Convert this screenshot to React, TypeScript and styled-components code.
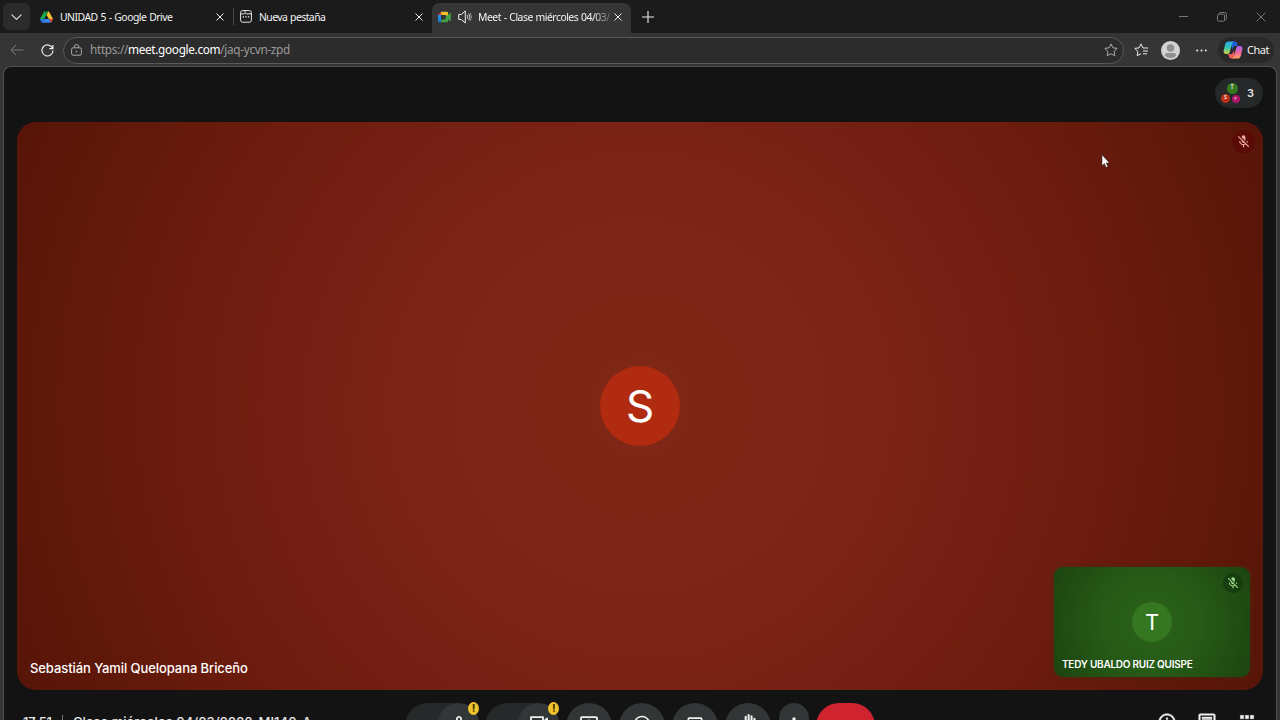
import React from "react";
import styled, { createGlobalStyle } from "styled-components";
import {
  MdApps,
  MdBackHand,
  MdInfoOutline,
  MdMicNone,
  MdMicOff,
  MdMoreVert,
  MdOutlineChat,
  MdOutlineClosedCaption,
  MdOutlineMood,
} from "react-icons/md";

const GlobalStyle = createGlobalStyle`
  *, *::before, *::after { box-sizing: border-box; }
  body { margin: 0; background: #353535; overflow: hidden; }
  svg { display: block; flex: none; }
`;

const ui = `"Noto Sans", "Open Sans", sans-serif`;
const meet = `Inter, Roboto, sans-serif`;

const Window = styled.div`
  display: flex;
  flex-direction: column;
  width: 1280px;
  height: 720px;
  overflow: hidden;
  background: #353535;
  font-family: ${ui};
  color: #f3f3f3;
`;

/* Tab strip */

const TabStrip = styled.header`
  display: flex;
  align-items: flex-end;
  height: 33px;
  flex: none;
  padding-left: 3px;
  background: #1b1b1b;
`;

const TabMenuButton = styled.div`
  display: grid;
  place-items: center;
  width: 27px;
  height: 27px;
  margin-bottom: 3px;
  border-radius: 6px;
  background: #2b2b2b;
`;

const Tab = styled.div<{ $width: number; $inset?: number; $active?: boolean; $divided?: boolean }>`
  position: relative;
  display: flex;
  align-items: center;
  width: ${(p) => p.$width}px;
  height: 30px;
  padding: 0 9px 3px ${(p) => p.$inset ?? 6}px;
  border-radius: 7px 7px 0 0;
  background: ${(p) => (p.$active ? "#353535" : "transparent")};
  ${(p) =>
    p.$divided &&
    `&::after {
      content: "";
      position: absolute;
      right: -1px;
      top: 5px;
      width: 1px;
      height: 17px;
      background: #484848;
    }`}
`;

const TabTitle = styled.span<{ $gap: number; $spacing: number; $fade?: boolean }>`
  flex: 1;
  min-width: 0;
  margin-left: ${(p) => p.$gap}px;
  font-size: 10.4px;
  line-height: 16px;
  letter-spacing: ${(p) => p.$spacing}px;
  word-spacing: 0.6px;
  white-space: nowrap;
  ${(p) => p.$fade && `mask-image: linear-gradient(90deg, #000 115px, rgba(0,0,0,.25) 131px);`}
`;

const TabSound = styled.span`
  margin-left: 7px;
`;

const NewTab = styled.div`
  display: grid;
  place-items: center;
  width: 34px;
  height: 30px;
  padding-bottom: 2px;
`;

const WindowButtons = styled.div`
  display: flex;
  align-items: center;
  gap: 29px;
  height: 33px;
  margin-left: auto;
  padding-right: 14px;
`;

/* Address bar */

const Toolbar = styled.div`
  display: flex;
  align-items: center;
  height: 33px;
  flex: none;
  padding: 1px 6px 0 10px;
`;

const NavIcons = styled.div`
  display: flex;
  gap: 17px;
  align-items: center;
  width: 53px;
`;

const AddressField = styled.div`
  display: flex;
  align-items: center;
  width: 1061px;
  height: 27px;
  padding: 0 5px 0 7px;
  border: 1px solid #595959;
  border-radius: 14px;
  background: #2c2c2c;
`;

const Url = styled.span`
  flex: 1;
  margin-left: 8px;
  padding-bottom: 2px;
  font-size: 11.8px;
  line-height: 18px;
  letter-spacing: -0.33px;
  color: #9a9a9a;
  b {
    font-weight: 400;
    color: #fff;
  }
`;

const ToolbarActions = styled.div`
  display: flex;
  align-items: center;
  flex: 1;
  padding-left: 10px;
`;

const Profile = styled.span`
  margin: 0 16px 0 12px;
`;

const ChatPill = styled.div`
  display: flex;
  align-items: center;
  gap: 4px;
  width: 56px;
  height: 26px;
  margin-left: auto;
  padding-left: 5px;
  border-radius: 13px;
  background: #292929;
  font-size: 11px;
  letter-spacing: -0.5px;
  span {
    padding-bottom: 2px;
  }
`;

/* Call page */

const CallPage = styled.main`
  display: flex;
  flex-direction: column;
  flex: 1;
  min-height: 0;
  margin: 0 3px;
  padding: 0 13px 0 13px;
  border: 1px solid #505050;
  border-bottom: 0;
  border-radius: 8px 8px 0 0;
  background: #131314;
  overflow: hidden;
  font-family: ${meet};
`;

const CallHeader = styled.div`
  display: flex;
  justify-content: flex-end;
  height: 55px;
  flex: none;
  padding-top: 11px;
`;

const PeoplePill = styled.div`
  display: flex;
  align-items: center;
  gap: 7px;
  width: 48px;
  height: 30px;
  padding-left: 5px;
  border-radius: 15px;
  background: #252829;
  font-size: 11px;
  font-weight: 600;
  color: #e3e3e3;
`;

const Faces = styled.div`
  display: grid;
  grid-template-columns: 11px 9px;
  grid-template-rows: 11px 10px;
  width: 20px;
  place-items: center;
`;

const Face = styled.span<{ $color: string; $size: number; $wide?: boolean }>`
  display: grid;
  place-items: center;
  width: ${(p) => p.$size}px;
  height: ${(p) => p.$size}px;
  border-radius: 50%;
  background: ${(p) => p.$color};
  font-size: ${(p) => p.$size / 2}px;
  font-weight: 500;
  line-height: 1;
  color: #fff;
  ${(p) => p.$wide && "grid-column: span 2; margin-left: 4px;"}
`;

const MainTile = styled.section`
  display: flex;
  position: relative;
  height: 568px;
  flex: none;
  border-radius: 19px;
  background: radial-gradient(circle at 50% 50%, #812717 0, #7d2416 220px, #752014 330px, #6d1c0e 460px, #5e1809 600px, #571508 684px);
`;

const Centered = styled.div`
  display: grid;
  place-items: center;
  flex: 1;
`;

const Avatar = styled.div<{ $size: number; $font: number; $color: string }>`
  display: grid;
  place-items: center;
  width: ${(p) => p.$size}px;
  height: ${(p) => p.$size}px;
  border-radius: 50%;
  background: ${(p) => p.$color};
  font-size: ${(p) => p.$font}px;
  line-height: 1;
  color: #fff;
`;

const MuteBadge = styled.div<{ $size: number; $bg: string; $color: string; $top: number; $right: number }>`
  position: absolute;
  top: ${(p) => p.$top}px;
  right: ${(p) => p.$right}px;
  display: grid;
  place-items: center;
  width: ${(p) => p.$size}px;
  height: ${(p) => p.$size}px;
  border-radius: 50%;
  background: ${(p) => p.$bg};
  color: ${(p) => p.$color};
`;

const NameLabel = styled.span<{ $small?: boolean }>`
  position: absolute;
  left: ${(p) => (p.$small ? 8 : 13)}px;
  bottom: ${(p) => (p.$small ? 5 : 12)}px;
  font-size: ${(p) => (p.$small ? 10 : 13)}px;
  font-weight: ${(p) => (p.$small ? 600 : 500)};
  line-height: ${(p) => (p.$small ? 16 : 20)}px;
  letter-spacing: ${(p) => (p.$small ? -0.24 : -0.08)}px;
  white-space: nowrap;
  color: #fff;
`;

const SelfTile = styled.div`
  position: absolute;
  right: 13px;
  bottom: 13px;
  display: flex;
  width: 196px;
  height: 110px;
  border-radius: 9px;
  background: radial-gradient(circle at 50% 50%, #2a6219 0, #265a17 50px, #1d4710 105px);
  box-shadow: 0 0 4px 1px rgba(70, 45, 15, 0.6);
`;

const CallFooter = styled.footer`
  display: grid;
  grid-template-columns: 388px 1fr auto;
  align-items: start;
  height: 48px;
  margin-top: 13px;
  flex: none;
`;

const MeetingInfo = styled.div`
  display: flex;
  align-items: center;
  height: 38px;
  padding-left: 6px;
  font-size: 13px;
  font-weight: 500;
  letter-spacing: 0.06px;
  white-space: nowrap;
  color: #e8e8e8;
`;

const Time = styled.span`
  width: 33px;
  letter-spacing: -0.2px;
`;

const Divider = styled.i`
  width: 1px;
  height: 14px;
  margin: 0 10px 0 6px;
  background: #777;
`;

const Controls = styled.div`
  display: flex;
  gap: 7.25px;
`;

const ControlGroup = styled.div`
  position: relative;
  display: flex;
  justify-content: flex-end;
  width: 74px;
  height: 46px;
  margin-right: -1px;
  border-radius: 23px;
  background: #25292a;
`;

const ControlButton = styled.div<{ $width?: number; $danger?: boolean }>`
  display: flex;
  justify-content: center;
  width: ${(p) => p.$width ?? 46}px;
  height: 46px;
  padding-top: 11px;
  border-radius: 23px;
  background: ${(p) => (p.$danger ? "#cf2330" : "#323637")};
  color: #f0f0f0;
`;

const Warning = styled.span`
  position: absolute;
  top: -1px;
  right: 0;
  display: grid;
  place-items: center;
  width: 11px;
  height: 13px;
  border-radius: 50%;
  background: #eec32b;
  font-size: 11px;
  font-weight: 700;
  line-height: 1;
  color: #3b2c00;
`;

const SideActions = styled.div`
  display: flex;
  gap: 20px;
  padding: 9px 6px 0 0;
  color: #eee;
  path:not([fill="none"]) {
    stroke: currentColor;
    stroke-width: 0.5px;
  }
`;

const DriveLogo = () => (
  <svg width="13" height="12" viewBox="0 0 87.3 78">
    <path fill="#2573e8" d="m6.6 66.85 3.85 6.65c.8 1.4 1.95 2.5 3.3 3.3L27.5 53H0c0 1.55.4 3.1 1.2 4.5z" />
    <path fill="#19a84b" d="M43.65 25 29.9 1.2c-1.35.8-2.5 1.9-3.3 3.3l-25.4 44A9 9 0 0 0 0 53h27.5z" />
    <path fill="#e94435" d="M73.55 76.8c1.35-.8 2.5-1.9 3.3-3.3l9-15.5c.8-1.4 1.4-3.45 1.4-5H59.8l5.85 11.5z" />
    <path fill="#168a3c" d="M43.65 25 57.4 1.2C56.05.4 54.5 0 52.9 0H34.4c-1.6 0-3.15.45-4.5 1.2z" />
    <path fill="#3b82f0" d="M59.8 53H27.5L13.75 76.8c1.35.8 2.9 1.2 4.5 1.2h50.8c1.6 0 3.15-.45 4.5-1.2z" />
    <path fill="#fbc02d" d="m73.4 26.5-12.7-22c-.8-1.4-1.95-2.5-3.3-3.3L43.65 25 59.8 53h27.45c0-1.55-.4-3.1-1.2-4.5z" />
  </svg>
);

const MeetLogo = () => (
  <svg width="13" height="12" viewBox="0 0 13 12">
    <path fill="#1e88e5" d="M0 4h3v5H0z" />
    <path fill="#e53935" d="M0 4 3.2.8V4z" />
    <path fill="#fbc02d" d="M3.2.8h6A1 1 0 0 1 10 1.8V6L7.5 4H3.2z" />
    <path fill="#1976d2" d="M0 8.5h3.2v2.8H1a1 1 0 0 1-1-1z" />
    <path fill="#43a047" d="M3.2 8.5h4.3V6L12 2q.8-.4.8.4v7.2q0 .8-.8.4l-2-1.6v1.9a1 1 0 0 1-1 1H3.2z" />
  </svg>
);

const NewTabIcon = () => (
  <svg width="12" height="13" viewBox="0 0 12 13" fill="none" stroke="#e8e8e8">
    <rect x=".6" y=".6" width="10.8" height="11.6" rx="2" />
    <path d="M.8 3.9h3.8M5 .8v1.6q0 1.4 1.4 1.4h5" />
    <path d="M2.7 6.9h1.4M5.3 6.9h1.4M7.9 6.9h1.4" strokeWidth="1.3" />
  </svg>
);

const SpeakerIcon = () => (
  <svg width="14" height="14" viewBox="0 0 14 14" fill="none" stroke="#eee" strokeLinejoin="round">
    <path d="M.7 4.5h2.6L7.3 1v12l-4-3.5H.7z" />
    <path d="M9.2 5q1.2 2 0 4M10.8 3.7q2.3 3.3 0 6.6" strokeWidth=".8" />
    <path d="M12.2 3q2.6 4 0 8" strokeWidth=".5" />
  </svg>
);

const CloseIcon = ({ size = 8, color = "#eee" }: { size?: number; color?: string }) => (
  <svg width={size} height={size} viewBox="0 0 8 8" stroke={color} strokeWidth={8 / size}>
    <path d="m.5.5 7 7m0-7-7 7" />
  </svg>
);

const BackIcon = () => (
  <svg width="14" height="12" viewBox="0 0 14 12" fill="none" stroke="#777">
    <path d="M13.5 6H1M6 1 1 6l5 5" />
  </svg>
);

const ReloadIcon = () => (
  <svg width="13" height="13" viewBox="0 0 13 13" fill="none" stroke="#eee" strokeWidth="1.2">
    <path d="M11.6 4.4A5.5 5.5 0 1 0 12 6.5M11.9 1v3.6H8.4" />
  </svg>
);

const LockIcon = () => (
  <svg width="11" height="12" viewBox="0 0 11 12" fill="none" stroke="#aaa">
    <rect x=".6" y="3.8" width="9.8" height="7.4" rx="1.5" />
    <path d="M3.2 3.6V2.9a2.3 2.3 0 0 1 4.6 0v.7" />
    <circle cx="5.5" cy="7.5" r=".8" fill="#aaa" stroke="none" />
  </svg>
);

const StarIcon = () => (
  <svg width="14" height="14" viewBox="0 0 14 14" fill="none" stroke="#aaa" strokeLinejoin="round">
    <path d="m7 .9 1.9 3.9 4.3.6-3.1 3 .7 4.3L7 10.7l-3.8 2 .7-4.3-3.1-3 4.3-.6z" />
  </svg>
);

const FavoritesIcon = () => (
  <svg width="15" height="14" viewBox="0 0 15 14" fill="none" stroke="#eee" strokeLinejoin="round">
    <path d="M8.9 5 7 .9 5.1 4.8l-4.3.6 3.1 3-.7 4.3L7 10.7M8.9 5h5.3M9 8h5M9 10.8h4" />
  </svg>
);

const ProfileIcon = () => (
  <svg width="19" height="19" viewBox="0 0 19 19">
    <circle cx="9.5" cy="9.5" r="9.5" fill="#d2d2d2" />
    <circle cx="9.5" cy="7" r="3.7" fill="#8f8f8f" />
    <path d="M3.7 14.5Q3.7 12 6 12h7q2.3 0 2.3 2.5a7.8 7.8 0 0 1-11.6 0" fill="#8f8f8f" />
  </svg>
);

const CopilotLogo = () => (
  <svg width="20" height="18" viewBox="0 0 20 18">
    <defs>
      <linearGradient id="cpA" x1="0" y1="0" x2="0" y2="1">
        <stop offset="0" stopColor="#2aa7f0" />
        <stop offset=".5" stopColor="#35c5ad" />
        <stop offset="1" stopColor="#d8d53d" />
      </linearGradient>
      <linearGradient id="cpB" x1="0" y1="0" x2="0" y2="1">
        <stop offset="0" stopColor="#a763f0" />
        <stop offset=".55" stopColor="#f0679b" />
        <stop offset="1" stopColor="#ffa657" />
      </linearGradient>
    </defs>
    <path fill="#1f5fd8" d="M8.5.5h3.2q1.8 0 2.3 1.8L14.8 5h-2.6q-1.6 0-2.1 1.6L9 9z" />
    <path fill="#ee5c5b" d="M11.5 17.5H8.3q-1.8 0-2.3-1.8L5.2 13h2.6q1.6 0 2.1-1.6L11 9z" />
    <path fill="url(#cpA)" d="M5 .5h6Q9.6 1 9.1 2.8L6.8 11q-.6 2-2.5 2H3Q-.1 13 .7 9.6L2.2 3Q2.9.5 5 .5" />
    <path fill="url(#cpB)" d="M15 17.5H9q1.4-.5 1.9-2.3L13.2 7q.6-2 2.5-2H17q3.1 0 2.3 3.4L17.8 15q-.7 2.5-2.8 2.5" />
  </svg>
);

const CameraIcon = () => (
  <svg width="20" height="20" viewBox="0 0 20 20" fill="none" stroke="#f0f0f0" strokeWidth="1.8" strokeLinejoin="round">
    <path d="M2 3.1h12v13.8H2z" />
    <path d="m14 8.5 4-4v11l-4-4" />
  </svg>
);

const PresentIcon = () => (
  <svg width="20" height="20" viewBox="0 0 20 20" fill="none" stroke="#f0f0f0" strokeWidth="1.8" strokeLinejoin="round">
    <rect x="2" y="3.1" width="16" height="13.8" rx=".8" />
    <path d="M10 14V6.6M6.8 9.5 10 6.3l3.2 3.2" />
  </svg>
);

const Cursor = styled.svg`
  position: absolute;
  left: 1084px;
  top: 32px;
`;

export default function App() {
  return (
    <Window>
      <GlobalStyle />
      <TabStrip>
        <TabMenuButton>
          <svg width="11" height="6" viewBox="0 0 11 6" fill="none" stroke="#eee" strokeWidth="1.1">
            <path d="m.6.6 4.9 4.7L10.4.6" />
          </svg>
        </TabMenuButton>
        <Tab $width={203} $inset={10} $divided>
          <DriveLogo />
          <TabTitle $gap={7} $spacing={-0.5}>UNIDAD 5 - Google Drive</TabTitle>
          <CloseIcon />
        </Tab>
        <Tab $width={199} $inset={7}>
          <NewTabIcon />
          <TabTitle $gap={7} $spacing={-0.55}>Nueva pestaña</TabTitle>
          <CloseIcon />
        </Tab>
        <Tab $width={199} $active>
          <MeetLogo />
          <TabSound>
            <SpeakerIcon />
          </TabSound>
          <TabTitle $gap={6} $spacing={-0.5} $fade>Meet - Clase miércoles 04/03/</TabTitle>
          <CloseIcon />
        </Tab>
        <NewTab>
          <svg width="12" height="12" viewBox="0 0 12 12" stroke="#eee" strokeWidth="1.1">
            <path d="M6 0v12M0 6h12" />
          </svg>
        </NewTab>
        <WindowButtons>
          <svg width="9" height="9" viewBox="0 0 9 9" stroke="#777">
            <path d="M0 4.5h9" />
          </svg>
          <svg width="10" height="10" viewBox="0 0 10 10" fill="none" stroke="#777">
            <rect x=".5" y="2.2" width="7" height="7" rx="1" />
            <path d="M2.3 2V1.4q0-.9.9-.9h4.4q1.8 0 1.8 1.8v4.4q0 .9-1 .9h-.6" />
          </svg>
          <CloseIcon size={10} color="#777" />
        </WindowButtons>
      </TabStrip>
      <Toolbar>
        <NavIcons>
          <BackIcon />
          <ReloadIcon />
        </NavIcons>
        <AddressField>
          <LockIcon />
          <Url>
            https://<b>meet.google.com</b>/jaq-ycvn-zpd
          </Url>
          <StarIcon />
        </AddressField>
        <ToolbarActions>
          <FavoritesIcon />
          <Profile>
            <ProfileIcon />
          </Profile>
          <svg width="11" height="3" viewBox="0 0 11 3" fill="#eee">
            <circle cx="1.2" cy="1.5" r="1" />
            <circle cx="5.5" cy="1.5" r="1" />
            <circle cx="9.8" cy="1.5" r="1" />
          </svg>
          <ChatPill>
            <CopilotLogo />
            <span>Chat</span>
          </ChatPill>
        </ToolbarActions>
      </Toolbar>
      <CallPage>
        <CallHeader>
          <PeoplePill>
            <Faces>
              <Face $color="#36791f" $size={11} $wide>T</Face>
              <Face $color="#b9301a" $size={9}>S</Face>
              <Face $color="#b0126b" $size={8}>Y</Face>
            </Faces>
            3
          </PeoplePill>
        </CallHeader>
        <MainTile>
          <Centered>
            <Avatar $size={80} $font={44} $color="#b02b0f">S</Avatar>
          </Centered>
          <MuteBadge $size={23} $top={8} $right={8} $bg="#5a0b06" $color="#f0a9a0">
            <MdMicOff size={15} />
          </MuteBadge>
          <NameLabel>Sebastián Yamil Quelopana Briceño</NameLabel>
          <SelfTile>
            <Centered>
              <Avatar $size={40} $font={22} $color="#357720">T</Avatar>
            </Centered>
            <MuteBadge $size={20} $top={6} $right={7} $bg="#153d0d" $color="#a4dd92">
              <MdMicOff size={14} />
            </MuteBadge>
            <NameLabel $small>TEDY UBALDO RUIZ QUISPE</NameLabel>
          </SelfTile>
          <Cursor width="9" height="14" viewBox="0 0 9 14">
            <path d="M1 .8v11l2.4-2.2 1.7 3.8 1.8-.8-1.7-3.7h3.2z" fill="#fff" stroke="#222" strokeWidth=".5" />
          </Cursor>
        </MainTile>
        <CallFooter>
          <MeetingInfo>
            <Time>17:51</Time>
            <Divider />
            Clase miércoles 04/03/2026-MI140-A
          </MeetingInfo>
          <Controls>
            <ControlGroup>
              <ControlButton $width={41}><MdMicNone size={24} /></ControlButton>
              <Warning>!</Warning>
            </ControlGroup>
            <ControlGroup>
              <ControlButton $width={41}><CameraIcon /></ControlButton>
              <Warning>!</Warning>
            </ControlGroup>
            <ControlButton><PresentIcon /></ControlButton>
            <ControlButton><MdOutlineMood size={20} /></ControlButton>
            <ControlButton><MdOutlineClosedCaption size={20} /></ControlButton>
            <ControlButton><MdBackHand size={20} /></ControlButton>
            <ControlButton $width={30}><MdMoreVert size={20} /></ControlButton>
            <ControlButton $width={59} $danger />
          </Controls>
          <SideActions>
            <MdInfoOutline size={20} />
            <MdOutlineChat size={20} />
            <MdApps size={20} />
          </SideActions>
        </CallFooter>
      </CallPage>
    </Window>
  );
}
